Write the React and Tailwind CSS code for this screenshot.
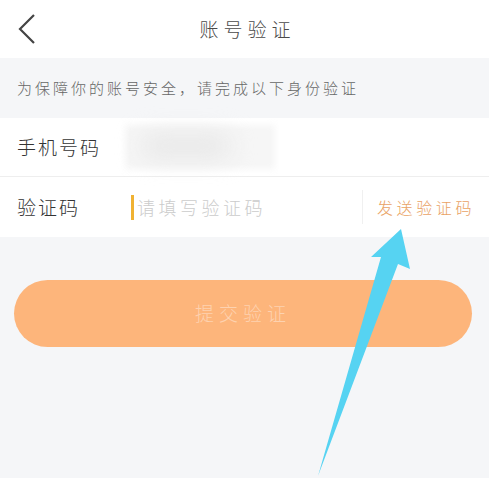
const App = () => {
  return (
    <div
      className="relative w-[489px] h-[478px] overflow-hidden bg-[#f5f6f8]"
      style={{ fontFamily: '"Noto Sans CJK SC", "Noto Sans", sans-serif' }}
    >
      {/* header */}
      <div className="relative h-[58px] bg-white flex items-center justify-center">
        <svg className="absolute left-[14px] top-[11px]" width="26" height="36" viewBox="0 0 26 36">
          <path d="M20 4 L6 18 L20 32" fill="none" stroke="#444" strokeWidth="2.2" />
        </svg>
        <span className="ml-[6px] text-[19px] tracking-[5px] text-[#4a4a4a] font-light">账号验证</span>
      </div>

      {/* notice */}
      <div className="h-[60px] flex items-center pl-[17px]">
        <span className="text-[15px] tracking-[3px] text-[#666] font-light">为保障你的账号安全，请完成以下身份验证</span>
      </div>

      {/* phone row */}
      <div className="h-[59px] bg-white flex items-center pl-[17px] border-b border-[#eeeeee]">
        <span className="w-[108px] text-[19px] tracking-[2px] text-[#333] font-light">手机号码</span>
        <div className="relative w-[150px] h-[44px]">
          <div className="absolute inset-0 bg-[#f6f6f6] blur-[3px]" />
          <div className="absolute left-[16px] top-[10px] w-[90px] h-[22px] bg-[#e6e6e6] rounded-full blur-md" />
        </div>
      </div>

      {/* code row */}
      <div className="h-[60px] bg-white flex items-center pl-[17px]">
        <span className="w-[114px] text-[19px] tracking-[2px] text-[#333] font-light">验证码</span>
        <div className="w-[3px] h-[25px] bg-[#f0b233]" />
        <span className="ml-[3px] text-[18px] tracking-[3.5px] text-[#cccccc] font-light">请填写验证码</span>
        <div className="ml-auto w-px h-[34px] bg-[#f0f0f0]" />
        <span className="ml-[14px] mr-[14px] text-[16px] tracking-[3.6px] text-[#e9a264] font-light">发送验证码</span>
      </div>

      {/* submit */}
      <div className="px-[14px] pt-[43px]">
        <div className="h-[67px] w-[458px] rounded-full bg-[#fdb57b] flex items-center justify-center">
          <span className="text-[19px] tracking-[5px] text-[#fdd2b0] font-light">提交验证</span>
        </div>
      </div>

      {/* annotation arrow */}
      <svg className="absolute inset-0 pointer-events-none" width="489" height="478" viewBox="0 0 489 478">
        <polygon
          points="401,229 410,269 398,264 318,476 381,257 371,257"
          fill="#56d3f2"
        />
      </svg>
    </div>
  );
};

export default App;
